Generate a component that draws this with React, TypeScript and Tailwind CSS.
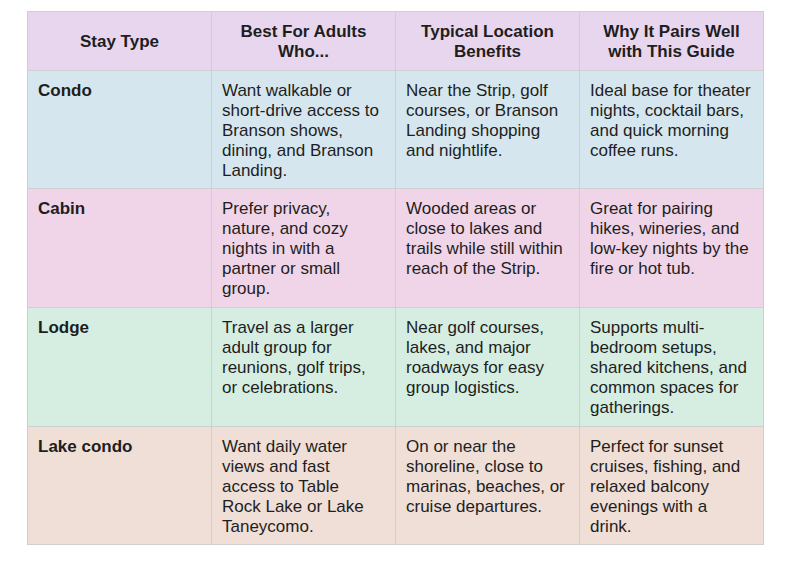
const rows = [
  {
    type: "Condo",
    bg: "bg-[#d6e6ee]",
    h: "h-[118px]",
    who: "Want walkable or short-drive access to Branson shows, dining, and Branson Landing.",
    where: "Near the Strip, golf courses, or Branson Landing shopping and nightlife.",
    why: "Ideal base for theater nights, cocktail bars, and quick morning coffee runs.",
  },
  {
    type: "Cabin",
    bg: "bg-[#f0d5e8]",
    h: "h-[119px]",
    who: "Prefer privacy, nature, and cozy nights in with a partner or small group.",
    where: "Wooded areas or close to lakes and trails while still within reach of the Strip.",
    why: "Great for pairing hikes, wineries, and low-key nights by the fire or hot tub.",
  },
  {
    type: "Lodge",
    bg: "bg-[#d6eee1]",
    h: "h-[119px]",
    who: "Travel as a larger adult group for reunions, golf trips, or celebrations.",
    where: "Near golf courses, lakes, and major roadways for easy group logistics.",
    why: "Supports multi-bedroom setups, shared kitchens, and common spaces for gatherings.",
  },
  {
    type: "Lake condo",
    bg: "bg-[#f0dfd7]",
    h: "h-[118px]",
    who: "Want daily water views and fast access to Table Rock Lake or Lake Taneycomo.",
    where: "On or near the shoreline, close to marinas, beaches, or cruise departures.",
    why: "Perfect for sunset cruises, fishing, and relaxed balcony evenings with a drink.",
  },
];

const headers = [
  "Stay Type",
  "Best For Adults Who...",
  "Typical Location Benefits",
  "Why It Pairs Well with This Guide",
];

const cell = "border border-[#cfcfcf] pl-[10px] pt-[10px] align-top";

export default function App() {
  return (
    <div className="min-h-screen bg-white pt-[11px] pl-[27px] font-['Liberation_Sans',Arial,sans-serif] text-[#1e1e1e]">
      <table className="w-[735px] table-fixed border-collapse text-[17px] leading-[20px]">
        <thead>
          <tr className="bg-[#e8d6ee]">
            {headers.map((h) => (
              <th
                key={h}
                className="h-[59px] w-[184px] border border-[#cfcfcf] px-[10px] pt-[2px] text-center align-middle font-bold"
              >
                {h}
              </th>
            ))}
          </tr>
        </thead>
        <tbody>
          {rows.map((r) => (
            <tr key={r.type} className={r.bg}>
              <td className={`${r.h} ${cell} pr-[12px] font-bold`}>{r.type}</td>
              <td className={`${cell} pr-[13px]`}>{r.who}</td>
              <td className={`${cell} pr-[12px]`}>{r.where}</td>
              <td className={`${cell} pr-[11px]`}>{r.why}</td>
            </tr>
          ))}
        </tbody>
      </table>
    </div>
  );
}
